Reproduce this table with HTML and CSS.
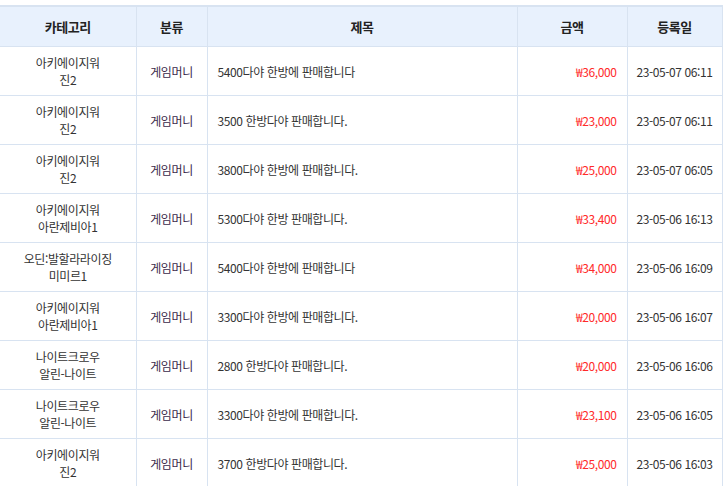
FILE: index.html
```html
<!DOCTYPE html>
<html lang="ko">
<head>
  <meta charset="UTF-8">
  <title>거래 목록</title>
  <link rel="stylesheet" href="styles.css">
</head>
<body>
  <table class="trade-list">
    <colgroup>
      <col class="col-cat">
      <col class="col-type">
      <col class="col-title">
      <col class="col-price">
      <col class="col-date">
    </colgroup>
    <thead>
      <tr>
        <th>카테고리</th>
        <th>분류</th>
        <th>제목</th>
        <th>금액</th>
        <th>등록일</th>
      </tr>
    </thead>
    <tbody>
      <tr>
        <td class="cat">아키에이지워<br>진2</td>
        <td class="type">게임머니</td>
        <td class="title">5400다야 한방에 판매합니다</td>
        <td class="price">₩36,000</td>
        <td class="date">23-05-07 06:11</td>
      </tr>
      <tr>
        <td class="cat">아키에이지워<br>진2</td>
        <td class="type">게임머니</td>
        <td class="title">3500 한방다야 판매합니다.</td>
        <td class="price">₩23,000</td>
        <td class="date">23-05-07 06:11</td>
      </tr>
      <tr>
        <td class="cat">아키에이지워<br>진2</td>
        <td class="type">게임머니</td>
        <td class="title">3800다야 한방에 판매합니다.</td>
        <td class="price">₩25,000</td>
        <td class="date">23-05-07 06:05</td>
      </tr>
      <tr>
        <td class="cat">아키에이지워<br>아란제비아1</td>
        <td class="type">게임머니</td>
        <td class="title">5300다야 한방 판매합니다.</td>
        <td class="price">₩33,400</td>
        <td class="date">23-05-06 16:13</td>
      </tr>
      <tr>
        <td class="cat">오딘:발할라라이징<br>미미르1</td>
        <td class="type">게임머니</td>
        <td class="title">5400다야 한방에 판매합니다</td>
        <td class="price">₩34,000</td>
        <td class="date">23-05-06 16:09</td>
      </tr>
      <tr>
        <td class="cat">아키에이지워<br>아란제비아1</td>
        <td class="type">게임머니</td>
        <td class="title">3300다야 한방에 판매합니다.</td>
        <td class="price">₩20,000</td>
        <td class="date">23-05-06 16:07</td>
      </tr>
      <tr>
        <td class="cat">나이트크로우<br>알린-나이트</td>
        <td class="type">게임머니</td>
        <td class="title">2800 한방다야 판매합니다.</td>
        <td class="price">₩20,000</td>
        <td class="date">23-05-06 16:06</td>
      </tr>
      <tr>
        <td class="cat">나이트크로우<br>알린-나이트</td>
        <td class="type">게임머니</td>
        <td class="title">3300다야 한방에 판매합니다.</td>
        <td class="price">₩23,100</td>
        <td class="date">23-05-06 16:05</td>
      </tr>
      <tr>
        <td class="cat">아키에이지워<br>진2</td>
        <td class="type">게임머니</td>
        <td class="title">3700 한방다야 판매합니다.</td>
        <td class="price">₩25,000</td>
        <td class="date">23-05-06 16:03</td>
      </tr>
    </tbody>
  </table>
</body>
</html>
```

FILE: styles.css
```css
body {
  font-family: "Noto Sans CJK KR", "Noto Sans", sans-serif;
  background-color: #fff;
  color: #333;
  margin: 0;
  padding: 5px 0 0 0;
}

.trade-list {
  width: 722px;
  border-collapse: collapse;
  table-layout: fixed;
  border-top: 2px solid #d8e3f1;
  font-size: 12px;
}

.col-cat { width: 136px; }
.col-type { width: 71px; }
.col-title { width: 310px; }
.col-price { width: 110px; }
.col-date { width: 95px; }

.trade-list th,
.trade-list td {
  border: 1px solid #d8e3f1;
  text-align: center;
  vertical-align: middle;
  padding: 0 10px;
  letter-spacing: -0.4px;
}

.trade-list tr > :first-child {
  border-left: none;
}

.trade-list th {
  background-color: #e8f1fd;
  font-size: 13px;
  font-weight: bold;
  height: 39px;
  color: #222;
}

.trade-list td {
  height: 48px;
  line-height: 17px;
}

.trade-list .cat {
  padding: 0 4px;
}

.trade-list .type {
  color: #3a2a4a;
}

.trade-list .title {
  text-align: left;
}

.trade-list td.price {
  text-align: right;
  color: #ff2a2a;
}

.trade-list .date {
  padding: 0 4px;
}
```
